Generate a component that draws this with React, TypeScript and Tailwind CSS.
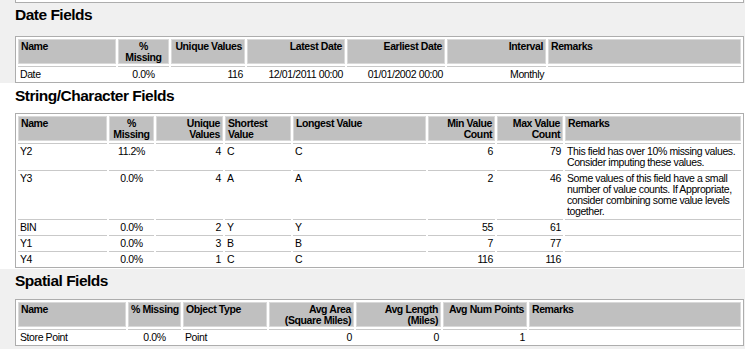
import React from "react";

type Align = "l" | "c" | "r";
type Col = { label: React.ReactNode; w?: string; a: Align; ha?: Align };

const alignCls: Record<Align, string> = {
  l: "text-left",
  c: "text-center",
  r: "text-right",
};

function Heading({ children, cls }: { children: React.ReactNode; cls: string }) {
  return (
    <h2
      className={`text-[15.5px] leading-[20px] font-bold tracking-[-0.5px] text-black ${cls}`}
    >
      {children}
    </h2>
  );
}

function DataTable({
  cols,
  rows,
  cls,
}: {
  cols: Col[];
  rows: React.ReactNode[][];
  cls: string;
}) {
  return (
    <table
      className={`w-[729px] table-fixed border-separate border-spacing-[2px] border border-[#adadad] bg-white ${cls}`}
    >
      <thead>
        <tr>
          {cols.map((c, i) => (
            <th
              key={i}
              className={`${c.w ?? ""} ${alignCls[c.ha ?? c.a]} align-top bg-[#c0c0c0] border border-[#d9d9d9] px-[2px] pt-[1px] pb-0 font-bold leading-[11px] h-[25px] whitespace-nowrap`}
            >
              {c.label}
            </th>
          ))}
        </tr>
      </thead>
      <tbody>
        {rows.map((r, ri) => (
          <tr key={ri}>
            {r.map((v, ci) => (
              <td
                key={ci}
                className={`${alignCls[cols[ci].a]} align-top border-t border-[#c9c9c9] px-[2px] pt-[2px] pb-0 leading-[11px] whitespace-nowrap`}
              >
                {v}
              </td>
            ))}
          </tr>
        ))}
      </tbody>
    </table>
  );
}

const dateCols: Col[] = [
  { label: "Name", w: "w-[98px]", a: "l" },
  { label: <>%<br />Missing</>, w: "w-[51px]", a: "c" },
  { label: "Unique Values", w: "w-[74px]", a: "r" },
  { label: "Latest Date", w: "w-[98px]", a: "r" },
  { label: "Earliest Date", w: "w-[98px]", a: "r" },
  { label: "Interval", w: "w-[99px]", a: "r" },
  { label: "Remarks", a: "l" },
];

const dateRows: React.ReactNode[][] = [
  ["Date", "0.0%", "116", "12/01/2011 00:00", "01/01/2002 00:00", "Monthly", ""],
];

const strCols: Col[] = [
  { label: "Name", w: "w-[89px]", a: "l" },
  { label: <>%<br />Missing</>, w: "w-[45px]", a: "c" },
  { label: <>Unique<br />Values</>, w: "w-[67px]", a: "r" },
  { label: <>Shortest<br />Value</>, w: "w-[66px]", a: "l" },
  { label: "Longest Value", w: "w-[133px]", a: "l" },
  { label: <>Min Value<br />Count</>, w: "w-[67px]", a: "r" },
  { label: <>Max Value<br />Count</>, w: "w-[66px]", a: "r" },
  { label: "Remarks", a: "l" },
];

const strRows: React.ReactNode[][] = [
  [
    "Y2",
    "11.2%",
    "4",
    "C",
    "C",
    "6",
    "79",
    <>
      This field has over 10% missing values.
      <br />
      Consider imputing these values.
    </>,
  ],
  [
    "Y3",
    "0.0%",
    "4",
    "A",
    "A",
    "2",
    "46",
    <>
      Some values of this field have a small
      <br />
      number of value counts. If Appropriate,
      <br />
      consider combining some value levels
      <br />
      together.
    </>,
  ],
  ["BIN", "0.0%", "2", "Y", "Y", "55", "61", ""],
  ["Y1", "0.0%", "3", "B", "B", "7", "77", ""],
  ["Y4", "0.0%", "1", "C", "C", "116", "116", ""],
];

const spCols: Col[] = [
  { label: "Name", w: "w-[108px]", a: "l" },
  { label: "% Missing", w: "w-[53px]", a: "c" },
  { label: "Object Type", w: "w-[84px]", a: "l" },
  { label: <>Avg Area<br />(Square Miles)</>, w: "w-[85px]", a: "r" },
  { label: <>Avg Length<br />(Miles)</>, w: "w-[85px]", a: "r" },
  { label: "Avg Num Points", w: "w-[84px]", a: "r" },
  { label: "Remarks", a: "l" },
];

const spRows: React.ReactNode[][] = [["Store Point", "0.0%", "Point", "0", "0", "1", ""]];

export default function App() {
  return (
    <div className="w-[751px] h-[354px] overflow-hidden bg-white text-black font-['Liberation_Sans',Arial,sans-serif] text-[10.5px] tracking-[-0.4px]">
      {/* tail of the previous report table */}
      <div className="w-[745px] h-[4px] bg-[#f0f0f0]">
        <div className="ml-[15px] w-[729px] h-[3px] bg-white border-x border-b border-[#adadad]" />
      </div>

      <section className="w-[745px] bg-[#f0f0f0] pl-[15px] pt-[1px]">
        <Heading cls="">Date Fields</Heading>
        <DataTable cols={dateCols} rows={dateRows} cls="mt-[11px]" />
      </section>

      <section className="w-[745px] bg-white pl-[15px] pt-[3px] pb-[1px]">
        <Heading cls="">String/Character Fields</Heading>
        <DataTable cols={strCols} rows={strRows} cls="mt-[7px]" />
      </section>

      <section className="w-[745px] bg-[#f0f0f0] pl-[15px] pt-[2px] pb-[3px]">
        <Heading cls="">Spatial Fields</Heading>
        <DataTable cols={spCols} rows={spRows} cls="mt-[8px]" />
      </section>
    </div>
  );
}
